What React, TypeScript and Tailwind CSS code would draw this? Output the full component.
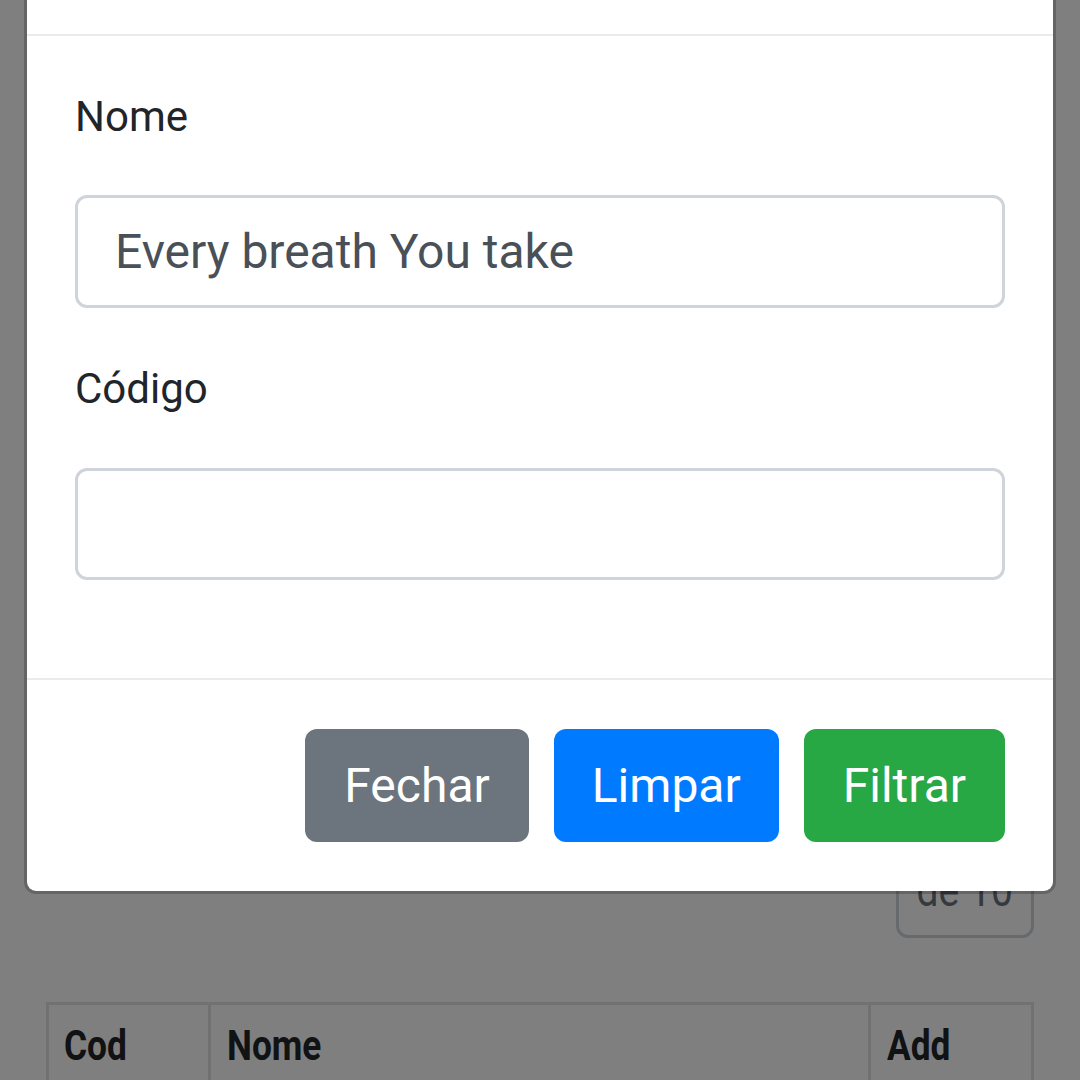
import React from "react";

export default function App() {
  return (
    <div className="relative w-[1080px] h-[1080px] overflow-hidden bg-white font-['Roboto',sans-serif]">
      {/* page behind the modal */}
      <div className="px-[46px] pt-[830px]">
        <div className="flex justify-end">
          <div className="h-[108px] w-[138px] border-[3px] border-[#ced4da] rounded-[12px] flex items-end justify-center pb-[22px] text-[46px] leading-none text-[#6c757d]">
            <span className="inline-block scale-x-[0.85]">de 10</span>
          </div>
        </div>
        <table className="mt-[64px] w-[988px] border-collapse border-[3px] border-[#dee2e6] text-[#212529]">
          <thead>
            <tr className="text-left text-[43px] font-bold">
              <th className="w-[162px] border-[3px] border-[#dee2e6] px-[15px] pt-[8px] pb-[30px] align-top">
                <span className="inline-block origin-left scale-x-[0.82]">Cod</span>
              </th>
              <th className="border-[3px] border-[#dee2e6] px-[16px] pt-[8px] pb-[30px] align-top">
                <span className="inline-block origin-left scale-x-[0.82]">Nome</span>
              </th>
              <th className="w-[163px] border-[3px] border-[#dee2e6] px-[16px] pt-[8px] pb-[30px] align-top">
                <span className="inline-block origin-left scale-x-[0.82]">Add</span>
              </th>
            </tr>
          </thead>
        </table>
      </div>

      {/* backdrop */}
      <div className="absolute inset-0 bg-black/50" />

      {/* modal */}
      <div className="absolute left-[24px] right-[24px] top-[-42px] bg-white border-[3px] border-black/20 rounded-[12px] bg-clip-padding">
        <div className="h-[75px] border-b-[2px] border-[#e9ecef]" />
        <div className="px-[48px] pt-[46px] pb-[52px]">
          <div className="mb-[46px]">
            <label className="block text-[42px] leading-[69px] text-[#212529] mb-[44px]">Nome</label>
            <div className="h-[113px] border-[3px] border-[#ced4da] rounded-[12px] flex items-center px-[37px] text-[48px] text-[#495057]">
              Every breath You take
            </div>
          </div>
          <div className="mb-[46px]">
            <label className="block text-[42px] leading-[69px] text-[#212529] mb-[45px]">Código</label>
            <div className="h-[112px] border-[3px] border-[#ced4da] rounded-[12px]" />
          </div>
        </div>
        <div className="border-t-[2px] border-[#e9ecef] px-[48px] pt-[49px] pb-[49px] flex justify-end gap-[25px]">
          <button className="h-[113px] px-[39px] rounded-[12px] bg-[#6c757d] text-white text-[48px]">Fechar</button>
          <button className="h-[113px] px-[38px] rounded-[12px] bg-[#007bff] text-white text-[48px]">Limpar</button>
          <button className="h-[113px] px-[39px] rounded-[12px] bg-[#28a745] text-white text-[48px]">Filtrar</button>
        </div>
      </div>
    </div>
  );
}
